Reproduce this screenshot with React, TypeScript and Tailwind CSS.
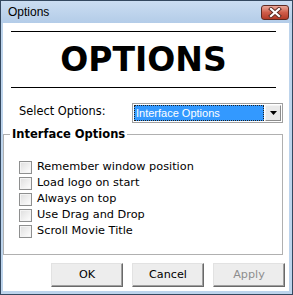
export default function App() {
  const items = [
    "Remember window position",
    "Load logo on start",
    "Always on top",
    "Use Drag and Drop",
    "Scroll Movie Title",
  ];
  return (
    <div className="w-[293px] h-[295px] bg-[#bdd4ec] border border-[#34485f] flex flex-col font-['DejaVu_Sans',sans-serif] text-black">
      <div className="h-[22px] flex items-start justify-between bg-gradient-to-b from-[#cbddf1] to-[#b3cce8] pl-[7px] pr-[3px]">
        <span className="mt-[4px] text-[12px] leading-[14px] font-['Liberation_Sans',sans-serif]">Options</span>
        <div className="mt-[4px] w-[28px] h-[15px] rounded-[3px] border border-[#5e2a22] bg-gradient-to-b from-[#e9a899] via-[#cf5d4a] to-[#b33a26] flex items-center justify-center">
          <svg width="14" height="11" viewBox="0 0 14 11">
            <path d="M3 2 L11 9 M11 2 L3 9" stroke="#5a2a22" strokeWidth="4" strokeLinecap="square" />
            <path d="M3 2 L11 9 M11 2 L3 9" stroke="#ffffff" strokeWidth="2.2" strokeLinecap="square" />
          </svg>
        </div>
      </div>
      <div className="ml-[2px] w-[286px] h-[268px] bg-white flex flex-col">
        <div className="mt-[8px] ml-[8px] w-[265px] h-px bg-black" />
        <div className="ml-[8px] w-[265px] h-[55px] flex items-center justify-center text-[33px] font-bold leading-none">
          OPTIONS
        </div>
        <div className="ml-[8px] w-[265px] h-px bg-black" />
        <div className="mt-[15px] h-[20px] flex items-center">
          <span className="ml-[16px] w-[113px] text-[11.4px] leading-none -mt-[3px]">Select Options:</span>
          <div className="w-[151px] h-[20px] border border-[#a0a0a0] bg-white flex p-px">
            <div className="flex-1 bg-[#3399ff] border border-dotted border-[#222] text-white text-[11px] leading-none font-['Liberation_Sans',sans-serif] flex items-center pl-[1px]">
              Interface Options
            </div>
            <div className="w-[16px] ml-px bg-[#e9e9e9] border border-[#f4f4f4] border-r-[#8c8c8c] border-b-[#8c8c8c] flex items-center justify-center">
              <svg width="7" height="4" viewBox="0 0 7 4">
                <polygon points="0,0 7,0 3.5,4" fill="#000" />
              </svg>
            </div>
          </div>
        </div>
        <fieldset className="mt-[4px] w-[280px] h-[128px] border border-[#b0b0b0] px-0 pt-[18px] flex flex-col">
          <legend className="ml-[6px] px-[2px] text-[11.5px] font-bold leading-[14px]">Interface Options</legend>
          {items.map((t) => (
            <div key={t} className="h-[16px] flex items-center pl-[15px] gap-[5px]">
              <span className="w-[13px] h-[13px] border border-[#8e8f8f] bg-gradient-to-br from-[#dedede] to-white shadow-[inset_0_0_0_1px_#f4f4f4]" />
              <span className="text-[11.3px] leading-none">{t}</span>
            </div>
          ))}
        </fieldset>
        <div className="mt-[8px] h-[24px] flex gap-[9px] pl-[48px]">
          {["OK", "Cancel", "Apply"].map((b) => (
            <div
              key={b}
              className={`w-[72px] h-[24px] bg-[#ededed] border border-[#e2e2e2] border-r-[#696969] border-b-[#696969] shadow-[inset_-1px_-1px_0_#a0a0a0] flex items-center justify-center text-[11.2px] leading-none ${b === "Apply" ? "text-[#8d8d8d]" : "text-black"}`}
            >
              {b}
            </div>
          ))}
        </div>
      </div>
    </div>
  );
}
